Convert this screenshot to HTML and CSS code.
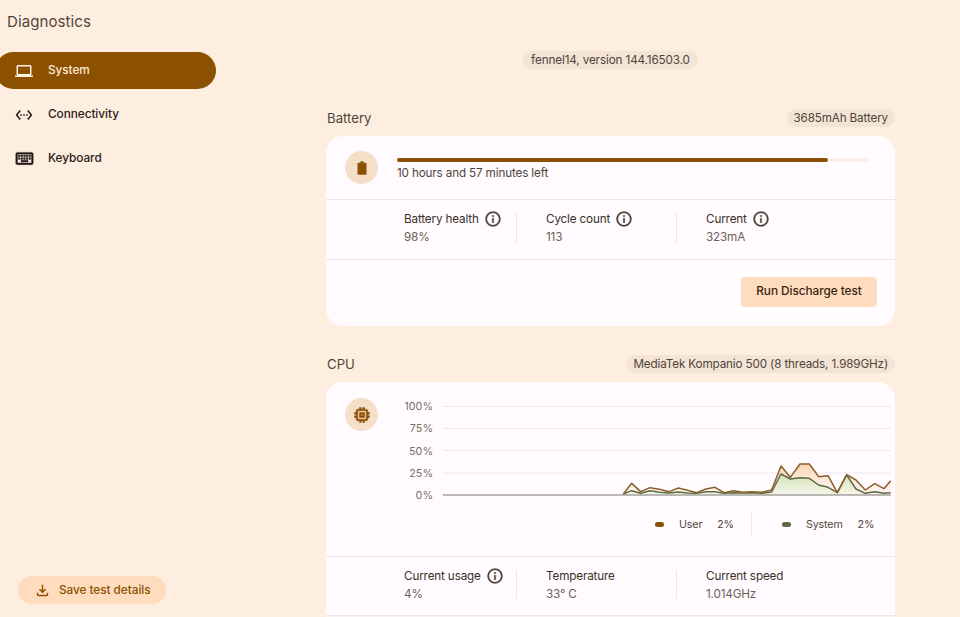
FILE: index.html
```html
<!DOCTYPE html>
<html lang="en">
<head>
<meta charset="utf-8">
<title>Diagnostics</title>
<link rel="stylesheet" href="styles.css">
</head>
<body>
<div class="app">
  <aside class="sidebar">
    <h1 class="title">Diagnostics</h1>
    <nav class="nav">
      <a class="nav-item active"><svg class="nav-icon" viewBox="0 0 24 24"><path d="M20 18c1.1 0 1.99-.9 1.99-2L22 6c0-1.1-.9-2-2-2H4c-1.1 0-2 .9-2 2v10c0 1.1.9 2 2 2H0v2h24v-2h-4zM4 6h16v10H4V6z"/></svg><span>System</span></a>
      <a class="nav-item"><svg class="nav-icon" viewBox="0 0 24 24"><path d="M7.77 6.76L6.23 5.48.82 12l5.41 6.52 1.54-1.28L3.42 12l4.35-5.24zM7 13h2v-2H7v2zm10-2h-2v2h2v-2zm-6 2h2v-2h-2v2zm6.77-7.52l-1.54 1.28L20.58 12l-4.35 5.24 1.54 1.28L23.18 12l-5.41-6.52z"/></svg><span>Connectivity</span></a>
      <a class="nav-item"><svg class="nav-icon nav-icon-keyboard" viewBox="0 0 24 24"><path d="M20 7v10H4V7h16m0-2H4c-1.1 0-1.99.9-1.99 2L2 17c0 1.1.9 2 2 2h16c1.1 0 2-.9 2-2V7c0-1.1-.9-2-2-2zm-9 3h2v2h-2zm0 3h2v2h-2zM8 8h2v2H8zm0 3h2v2H8zm-3 0h2v2H5zm0-3h2v2H5zm3 6h8v2H8zm6-3h2v2h-2zm0-3h2v2h-2zm3 3h2v2h-2zm0-3h2v2h-2z"/></svg><span>Keyboard</span></a>
    </nav>
    <button class="save-btn"><svg class="save-icon" viewBox="0 0 24 24"><path d="M18 15v3H6v-3H4v3c0 1.1.9 2 2 2h12c1.1 0 2-.9 2-2v-3h-2zm-1-4-1.41-1.41L13 12.17V4h-2v8.17L8.41 9.59 7 11l5 5 5-5z"/></svg>Save test details</button>
  </aside>

  <main class="main">
    <div class="version-row"><span class="chip chip-version">fennel14, version 144.16503.0</span></div>

    <section class="section">
      <header class="section-head"><h2 class="section-title">Battery</h2><span class="chip">3685mAh Battery</span></header>
      <div class="card">
        <div class="battery-top">
          <div class="round-icon"><svg viewBox="0 0 24 24"><path d="M17 5h-3V3h-4v2H7c-.6 0-1 .4-1 1v14c0 .6.4 1 1 1h10c.6 0 1-.4 1-1V6c0-.6-.4-1-1-1z"/></svg></div>
          <div class="battery-status">
            <div class="progress"><div class="progress-fill"></div></div>
            <div class="status-text">10 hours and 57 minutes left</div>
          </div>
        </div>
        <div class="metrics">
          <div class="metric metric-a"><div class="metric-label">Battery health<svg class="info" viewBox="0 0 24 24"><path d="M11 7h2v2h-2zm0 4h2v6h-2zm1-9C6.48 2 2 6.48 2 12s4.48 10 10 10 10-4.48 10-10S17.52 2 12 2zm0 18c-4.41 0-8-3.59-8-8s3.59-8 8-8 8 3.59 8 8-3.59 8-8 8z"/></svg></div><div class="metric-value">98%</div></div>
          <div class="metric metric-b"><div class="metric-label">Cycle count<svg class="info" viewBox="0 0 24 24"><path d="M11 7h2v2h-2zm0 4h2v6h-2zm1-9C6.48 2 2 6.48 2 12s4.48 10 10 10 10-4.48 10-10S17.52 2 12 2zm0 18c-4.41 0-8-3.59-8-8s3.59-8 8-8 8 3.59 8 8-3.59 8-8 8z"/></svg></div><div class="metric-value">113</div></div>
          <div class="metric metric-c"><div class="metric-label">Current<svg class="info" viewBox="0 0 24 24"><path d="M11 7h2v2h-2zm0 4h2v6h-2zm1-9C6.48 2 2 6.48 2 12s4.48 10 10 10 10-4.48 10-10S17.52 2 12 2zm0 18c-4.41 0-8-3.59-8-8s3.59-8 8-8 8 3.59 8 8-3.59 8-8 8z"/></svg></div><div class="metric-value">323mA</div></div>
        </div>
        <div class="actions"><button class="run-btn">Run Discharge test</button></div>
      </div>
    </section>

    <section class="section section-cpu">
      <header class="section-head"><h2 class="section-title">CPU</h2><span class="chip">MediaTek Kompanio 500 (8 threads, 1.989GHz)</span></header>
      <div class="card">
        <div class="cpu-top">
          <div class="round-icon round-icon-cpu"><svg viewBox="0 0 24 24"><path d="M15 9H9v6h6V9zm-2 4h-2v-2h2v2zm8-2V9h-2V7c0-1.1-.9-2-2-2h-2V3h-2v2h-2V3H9v2H7c-1.1 0-2 .9-2 2v2H3v2h2v2H3v2h2v2c0 1.1.9 2 2 2h2v2h2v-2h2v2h2v-2h2c1.1 0 2-.9 2-2v-2h2v-2h-2v-2h2zm-4 6H7V7h10v10z"/></svg></div>
          <div class="chart-wrap">
            <div class="chart">
              <div class="y-labels"><span>100%</span><span>75%</span><span>50%</span><span>25%</span><span>0%</span></div>
              <svg class="plot" viewBox="0 0 448 100" width="448" height="100">
                <defs>
                  <linearGradient id="userFill" x1="0" y1="0" x2="0" y2="1"><stop offset="0" stop-color="#f6c9a0" stop-opacity=".8"/><stop offset="1" stop-color="#fdeee0" stop-opacity=".4"/></linearGradient>
                  <linearGradient id="sysFill" x1="0" y1="0" x2="0" y2="1"><stop offset="0" stop-color="#cfe3b8" stop-opacity=".95"/><stop offset="1" stop-color="#eef5e4" stop-opacity=".6"/></linearGradient>
                </defs>
                <g class="grid-lines">
                  <line x1="0" x2="448" y1="6.5" y2="6.5"/>
                  <line x1="0" x2="448" y1="28.5" y2="28.5"/>
                  <line x1="0" x2="448" y1="50.5" y2="50.5"/>
                  <line x1="0" x2="448" y1="73" y2="73"/>
                </g>
                <g transform="translate(157 40) scale(.33333)">
                  <path fill="url(#userFill)" d="M70 165 L70 162 95 130 122 155 150 143 178 148 208 155 235 144 262 151 290 158 318 147 345 142 372 158 400 152 428 157 456 155 485 157 515 150 543 78 571 112 600 72 628 72 656 110 684 107 712 158 740 104 768 120 796 150 824 131 852 146 872 122 872 165Z"/>
                  <path fill="url(#sysFill)" d="M70 165 L70 162 95 152 122 160 150 152 178 157 208 159 235 156 262 159 290 160 318 155 345 155 372 160 400 158 428 159 456 158 485 160 515 156 543 102 571 117 600 113 628 115 656 135 684 142 712 158 740 105 768 147 796 160 824 155 852 160 872 158 872 165Z"/>
                  <polyline class="line-system" points="70,162 95,152 122,160 150,152 178,157 208,159 235,156 262,159 290,160 318,155 345,155 372,160 400,158 428,159 456,158 485,160 515,156 543,102 571,117 600,113 628,115 656,135 684,142 712,158 740,105 768,147 796,160 824,155 852,160 872,158"/>
                  <polyline class="line-user" points="70,162 95,130 122,155 150,143 178,148 208,155 235,144 262,151 290,158 318,147 345,142 372,158 400,152 428,157 456,155 485,157 515,150 543,78 571,112 600,72 628,72 656,110 684,107 712,158 740,104 768,120 796,150 824,131 852,146 872,122"/>
                </g>
                <line class="zero-line" x1="0" x2="448" y1="95" y2="95"/>
              </svg>
            </div>
            <div class="legend">
              <div class="legend-item legend-user"><span class="dot dot-user"></span><span class="legend-name">User</span><span class="legend-val">2%</span></div>
              <div class="legend-item legend-system"><span class="dot dot-system"></span><span class="legend-name">System</span><span class="legend-val">2%</span></div>
            </div>
          </div>
        </div>
        <div class="metrics metrics-cpu">
          <div class="metric metric-a"><div class="metric-label">Current usage<svg class="info" viewBox="0 0 24 24"><path d="M11 7h2v2h-2zm0 4h2v6h-2zm1-9C6.48 2 2 6.48 2 12s4.48 10 10 10 10-4.48 10-10S17.52 2 12 2zm0 18c-4.41 0-8-3.59-8-8s3.59-8 8-8 8 3.59 8 8-3.59 8-8 8z"/></svg></div><div class="metric-value">4%</div></div>
          <div class="metric metric-b"><div class="metric-label">Temperature</div><div class="metric-value">33° C</div></div>
          <div class="metric metric-c"><div class="metric-label">Current speed</div><div class="metric-value">1.014GHz</div></div>
        </div>
        <div class="card-rest"></div>
      </div>
    </section>
  </main>
</div>
</body>
</html>
```

FILE: styles.css
```css
* { box-sizing: border-box; }
html, body { margin: 0; height: 617px; overflow: hidden; }
body { background: #feeee0; font-family: Inter, "Liberation Sans", sans-serif; color: #201a17; }

.app { display: flex; height: 617px; overflow: hidden; }

.sidebar { width: 326px; flex: none; display: flex; flex-direction: column; }
.title { margin: 0; padding: 13px 0 0 7px; height: 52px; font-size: 15px; line-height: 18px; font-weight: 400; color: #50453a; letter-spacing: .1px; }
.nav { display: flex; flex-direction: column; gap: 7px; }
.nav-item { display: flex; align-items: center; gap: 15px; width: 221px; height: 37px; margin-left: -5px; padding-left: 20px; border-radius: 19px; font-size: 11.8px; letter-spacing: -.05px; font-weight: 500; color: #2a2019; }
.nav-item span { padding-bottom: 2px; }
.nav-item.active { background: #8b5000; color: #ffe9d6; }
.nav-icon { width: 18px; height: 18px; fill: #201a17; flex: none; }
.nav-icon-keyboard { width: 21px; height: 21px; margin: 0 -2px 0 -1px; stroke: #201a17; stroke-width: .4; }
.nav-item.active .nav-icon { fill: #fff1e4; }
.save-btn { display: flex; align-items: center; gap: 8px; align-self: flex-start; width: 148px; height: 28px; margin: auto 0 13px 18px; padding: 0 0 0 16px; border: 0; border-radius: 14px; background: #ffdcbe; color: #8b5000; font: 500 11.8px Inter, "Liberation Sans", sans-serif; letter-spacing: -.05px; }
.save-icon { width: 17px; height: 17px; fill: #8b5000; flex: none; }

.main { width: 569px; flex: none; }
.version-row { display: flex; justify-content: center; padding-top: 51px; height: 108px; }
.chip { display: inline-block; height: 18px; line-height: 18px; padding: 0 7px; border-radius: 9px; background: #f3e4d6; font-size: 11.7px; letter-spacing: -.15px; color: #50453a; white-space: nowrap; }
.chip-version { padding: 0 8px; letter-spacing: -.12px; }

.section-cpu { margin-top: 28px; }
.section-head { display: flex; justify-content: space-between; align-items: center; height: 19px; margin-bottom: 9px; }
.section-title { margin: 0; padding-left: 1px; font-size: 13.2px; font-weight: 400; color: #50453a; }

.card { background: #fffbff; border-radius: 17px; overflow: hidden; }
.battery-top { display: flex; height: 64px; padding: 15px 25px 0 19px; border-bottom: 1px solid #f0e6e0; }
.round-icon { width: 33px; height: 33px; flex: none; border-radius: 50%; background: #f5dfc9; display: flex; align-items: center; justify-content: center; }
.round-icon svg { width: 18px; height: 18px; fill: #8b5000; }
.round-icon-cpu svg { width: 20px; height: 20px; stroke: #8b5000; stroke-width: .6; }
.battery-status { flex: 1; margin-left: 19px; padding-top: 7px; }
.progress { height: 4px; border-radius: 2px; background: #fdf0e8; }
.progress-fill { width: 91.1%; height: 4px; border-radius: 2px; background: #8b5000; }
.status-text { margin-top: 3px; font-size: 11.7px; letter-spacing: -.15px; line-height: 16px; color: #50453a; }

.metrics { display: flex; height: 60px; padding-left: 78px; border-bottom: 1px solid #f0e6e0; }
.metric { padding-top: 9px; }
.metric-a { width: 112px; }
.metric-b { width: 160px; padding: 0 0 0 29px; border-left: 1px solid #f0e6e0; margin: 13px 0 16px; }
.metric-c { padding: 0 0 0 29px; border-left: 1px solid #f0e6e0; margin: 13px 0 16px; }
.metric-b .metric-label, .metric-c .metric-label { margin-top: -4px; }
.metric-label { display: flex; align-items: center; gap: 5px; height: 18px; padding-top: 2px; font-size: 11.7px; letter-spacing: -.15px; color: #3a3028; white-space: nowrap; }
.metric-value { margin-top: 2px; font-size: 11.7px; letter-spacing: -.15px; line-height: 16px; color: #6b5f55; white-space: nowrap; }
.info { width: 18px; height: 18px; flex: none; fill: #50453a; stroke: #50453a; stroke-width: .4; }
.actions { display: flex; justify-content: flex-end; height: 66px; padding: 17px 18px 0 0; }
.run-btn { width: 136px; height: 30px; border: 0; border-radius: 4px; background: #ffdcbe; color: #3a2410; font: 500 11.8px Inter, "Liberation Sans", sans-serif; letter-spacing: -.05px; padding: 0 0 2px; }

.cpu-top { display: flex; height: 175px; padding: 16px 4px 0 19px; border-bottom: 1px solid #f0e6e0; }
.chart-wrap { flex: 1; }
.chart { display: flex; height: 100px; margin-top: 2px; }
.y-labels { width: 55px; margin-top: -4px; display: flex; flex-direction: column; text-align: right; font-size: 10.8px; line-height: 22.25px; color: #7a6f66; }
.plot { margin-left: 10px; flex: none; display: block; overflow: visible; }
.grid-lines line { stroke: #f0e9e8; stroke-width: 1; }
.zero-line { stroke: #7c7670; stroke-width: 1.2; }
.line-user, .line-system { fill: none; stroke-width: 1.5; vector-effect: non-scaling-stroke; stroke-linejoin: round; }
.line-user { stroke: #8b5f28; }
.line-system { stroke: #5f6a42; }

.legend { display: flex; height: 30px; margin-top: 9px; font-size: 10.7px; letter-spacing: -.15px; color: #50453a; align-items: center; }
.legend-item { display: flex; align-items: center; }
.legend-user { margin-left: 277px; width: 96px; }
.legend-system { padding-left: 30px; border-left: 1px solid #f0e6e0; height: 24px; }
.dot { width: 9px; height: 5px; border-radius: 3px; flex: none; }
.dot-user { background: #8b5000; }
.dot-system { background: #5f6a42; }
.legend-name { margin-left: 15px; }
.legend-val { margin-left: 15px; }

.metrics-cpu { height: 59px; }
.card-rest { height: 30px; background: #f8f4f4; }
```
